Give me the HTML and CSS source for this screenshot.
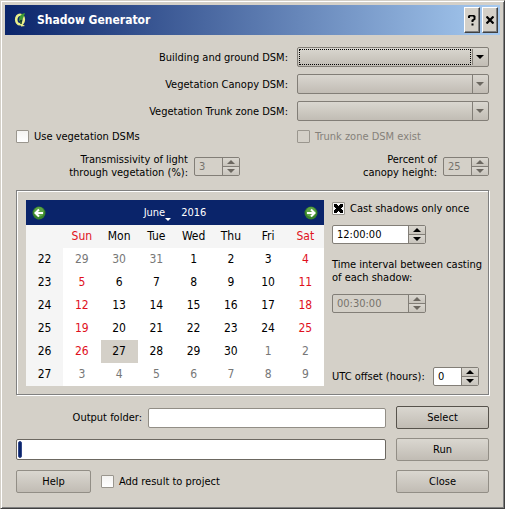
FILE: index.html
```html
<!DOCTYPE html>
<html lang="en">
<head>
<meta charset="utf-8">
<title>Shadow Generator</title>
<link rel="stylesheet" href="styles.css">
</head>
<body>
<main class="window">
  <header class="titlebar">
    <svg class="logo" viewBox="0 0 16 16" aria-hidden="true">
      <ellipse cx="7" cy="7.500" rx="3.800" ry="4.800" fill="none" stroke="#e9ef8a" stroke-width="2.600"/>
      <path d="M7 9l2 3 3 2-4 .5z" fill="#e9ef8a"/>
      <path d="M6 9c0-4 1-7 6-8-1 3-2 7-5 8z" fill="#3c9a35"/>
      <path d="M8 8v4" stroke="#12401c" stroke-width="1.500"/>
    </svg>
    <h1>Shadow Generator</h1>
    <button class="caption" aria-label="Context help"><svg width="8" height="11" viewBox="0 0 8 11"><path d="M1 3V1.500L2 .5h3l1.500 1V4L4.500 5.500V7" fill="none" stroke="#000" stroke-width="2"/><path d="M3.500 8.500h2v2h-2z"/></svg></button>
    <button class="caption" aria-label="Close window"><svg width="8" height="8" viewBox="0 0 8 8"><path d="M.5.500l7 7M7.500.500l-7 7" stroke="#000" stroke-width="2.200"/></svg></button>
  </header>

  <form class="content">
    <div class="sources">
      <label for="ground">Building and ground DSM:</label>
      <span class="combo focus"><select id="ground"></select></span>
      <label for="canopy">Vegetation Canopy DSM:</label>
      <span class="combo off"><select id="canopy" disabled></select></span>
      <label for="trunk">Vegetation Trunk zone DSM:</label>
      <span class="combo off"><select id="trunk" disabled></select></span>
    </div>

    <div class="options">
      <label class="check"><input type="checkbox">Use vegetation DSMs</label>
      <label class="check off"><input type="checkbox" disabled>Trunk zone DSM exist</label>
    </div>

    <div class="params">
      <div class="field">
        <label for="trans">Transmissivity of light<br>through vegetation (%):</label>
        <span class="spin off"><input id="trans" type="text" value="3" disabled><span class="steps"><button type="button" class="up" aria-label="Increase" disabled></button><button type="button" class="down" aria-label="Decrease" disabled></button></span></span>
      </div>
      <div class="field">
        <label for="percent">Percent of<br>canopy height:</label>
        <span class="spin off"><input id="percent" type="text" value="25" disabled><span class="steps"><button type="button" class="up" aria-label="Increase" disabled></button><button type="button" class="down" aria-label="Decrease" disabled></button></span></span>
      </div>
    </div>

    <section class="group">
      <div class="calendar">
        <div class="nav">
          <button type="button" class="arrow" aria-label="Previous month"><svg viewBox="0 0 14 14"><circle cx="7" cy="7" r="6.500" fill="#38822b"/><circle cx="7" cy="6" r="5" fill="#5ca445"/><path d="M11 7H4M7 3.500L3.500 7 7 10.500" fill="none" stroke="#fff" stroke-width="2"/></svg></button>
          <span class="when"><button type="button" class="month">June</button><button type="button">2016</button></span>
          <button type="button" class="arrow" aria-label="Next month"><svg viewBox="0 0 14 14"><circle cx="7" cy="7" r="6.500" fill="#38822b"/><circle cx="7" cy="6" r="5" fill="#5ca445"/><path d="M3 7h7M7 3.500L10.500 7 7 10.500" fill="none" stroke="#fff" stroke-width="2"/></svg></button>
        </div>
        <table>
          <thead><tr><td></td><th class="red">Sun</th><th>Mon</th><th>Tue</th><th>Wed</th><th>Thu</th><th>Fri</th><th class="red">Sat</th></tr></thead>
          <tbody>
            <tr><th>22</th><td class="dim">29</td><td class="dim">30</td><td class="dim">31</td><td>1</td><td>2</td><td>3</td><td class="red">4</td></tr>
            <tr><th>23</th><td class="red">5</td><td>6</td><td>7</td><td>8</td><td>9</td><td>10</td><td class="red">11</td></tr>
            <tr><th>24</th><td class="red">12</td><td>13</td><td>14</td><td>15</td><td>16</td><td>17</td><td class="red">18</td></tr>
            <tr><th>25</th><td class="red">19</td><td>20</td><td>21</td><td>22</td><td>23</td><td>24</td><td class="red">25</td></tr>
            <tr><th>26</th><td class="red">26</td><td class="selected">27</td><td>28</td><td>29</td><td>30</td><td class="dim">1</td><td class="dim">2</td></tr>
            <tr><th>27</th><td class="dim">3</td><td class="dim">4</td><td class="dim">5</td><td class="dim">6</td><td class="dim">7</td><td class="dim">8</td><td class="dim">9</td></tr>
          </tbody>
        </table>
      </div>
      <div class="times">
        <label class="check"><input type="checkbox" checked>Cast shadows only once</label>
        <span class="spin wide"><input type="text" value="12:00:00" aria-label="Time"><span class="steps"><button type="button" class="up" aria-label="Later"></button><button type="button" class="down" aria-label="Earlier"></button></span></span>
        <label for="interval" class="interval">Time interval between casting<br>of each shadow:</label>
        <span class="spin wide off"><input id="interval" type="text" value="00:30:00" disabled><span class="steps"><button type="button" class="up" aria-label="Increase" disabled></button><button type="button" class="down" aria-label="Decrease" disabled></button></span></span>
        <div class="utc">
          <label for="utc">UTC offset (hours):</label>
          <span class="spin"><input id="utc" type="text" value="0"><span class="steps"><button type="button" class="up" aria-label="Increase"></button><button type="button" class="down" aria-label="Decrease"></button></span></span>
        </div>
      </div>
    </section>

    <div class="actions">
      <div class="output"><label for="folder">Output folder:</label><input id="folder" class="line" type="text"></div>
      <button type="button" class="push default">Select</button>
      <div class="progress" role="progressbar" aria-label="Progress" aria-valuenow="0"><span class="chunk"></span></div>
      <button type="button" class="push">Run</button>
      <div class="bottom">
        <button type="button" class="push help">Help</button>
        <label class="check"><input type="checkbox">Add result to project</label>
      </div>
      <button type="button" class="push">Close</button>
    </div>
  </form>
</main>
</body>
</html>
```
FILE: styles.css
```css
* { box-sizing: border-box; }

body {
  margin: 0;
  background: #d4d0c8;
  color: #000;
  font: 11px/13px "DejaVu Sans Condensed", Tahoma, sans-serif;
}

button, input, select { font: inherit; color: inherit; margin: 0; }
button { padding: 0; }

.window {
  min-height: 100vh;
  padding: 3px;
  border: 1px solid;
  border-color: #d4d0c8 #404040 #404040 #d4d0c8;
  box-shadow: inset 1px 1px #fff, inset -1px -1px #808080;
}

/* Title bar */
.titlebar {
  display: flex;
  align-items: center;
  gap: 2px;
  height: 30px;
  margin: 1px;
  padding: 0 2px 0 8px;
  background: linear-gradient(90deg, #0a246a, #a6caf0);
}
.logo { width: 16px; height: 16px; }
h1 {
  flex: 1;
  margin: 0 0 0 6px;
  color: #fff;
  font: bold 12px/16px "DejaVu Sans Condensed", Tahoma, sans-serif;
}
.caption {
  display: grid;
  place-items: center;
  width: 16px;
  height: 26px;
  background: #d4d0c8;
  border: 1px solid;
  border-color: #fff #404040 #404040 #fff;
  box-shadow: inset -1px -1px #808080;
}

.content { padding: 11px 12px; }

/* Combo boxes */
.sources {
  display: grid;
  grid-template-columns: 1fr 192px;
  gap: 7px 9px;
  align-items: center;
  text-align: right;
}
.combo {
  position: relative;
  display: block;
  height: 20px;
}
.combo select {
  display: block;
  appearance: none;
  width: 100%;
  height: 100%;
  border: 1px solid #827e77;
  border-radius: 2px;
  background: linear-gradient(#dad7d0, #c1bcb4);
  opacity: 1;
}
.combo::before {
  content: "";
  position: absolute;
  top: 1px;
  bottom: 1px;
  right: 16px;
  border-left: 1px solid #827e77;
}
.combo::after {
  content: "";
  position: absolute;
  top: 8px;
  right: 5px;
  border: 4px solid transparent;
  border-top-color: #000;
  border-bottom: 0;
}
.combo.off::after { border-top-color: #6c6861; }
.combo.focus::before {
  left: 2px;
  top: 2px;
  bottom: 2px;
  right: 18px;
  border: 1px dotted #000;
  box-shadow: 1px 0 #d0ccc4, 2px 0 #827e77;
}

/* Check boxes */
.check { display: flex; align-items: center; gap: 5px; height: 13px; }
.check input {
  display: grid;
  place-items: center;
  appearance: none;
  width: 13px;
  height: 13px;
  border: 1px solid #9a968e;
  border-radius: 1px;
  background: linear-gradient(#f4f3f1, #fff);
}
.check.off { color: #85817a; }
.check.off input { background: #d4d0c8; }
.check input:checked::before {
  content: "";
  width: 9px;
  height: 9px;
  background:
    linear-gradient(45deg, transparent 36%, #000 36% 64%, transparent 64%),
    linear-gradient(-45deg, transparent 36%, #000 36% 64%, transparent 64%);
}
.options {
  display: grid;
  grid-template-columns: 1fr 192px;
  margin-top: 9px;
}

/* Spin boxes */
.spin {
  display: flex;
  width: 46px;
  height: 19px;
  border: 1px solid #827e77;
  border-radius: 2px;
  background: #fff;
  overflow: hidden;
}
.spin.wide { width: 94px; }
.spin > input {
  flex: 1;
  min-width: 0;
  padding: 0 4px;
  border: 0;
  background: none;
}
.spin.off { background: #d4d0c8; color: #77736c; }
.steps {
  display: flex;
  flex-direction: column;
  width: 17px;
  border-left: 1px solid #827e77;
}
.steps button {
  flex: 1;
  display: grid;
  place-items: center;
  border: 0;
  background: linear-gradient(#dad7d0, #c8c4bc);
}
.steps .down { border-top: 1px solid #827e77; }
.steps button::before { content: ""; border: 4px solid transparent; }
.steps .up::before { border-top: 0; border-bottom-color: #000; }
.steps .down::before { border-bottom: 0; border-top-color: #000; }
.off .steps .up::before { border-bottom-color: #6c6861; }
.off .steps .down::before { border-top-color: #6c6861; }

.params {
  display: flex;
  justify-content: space-between;
  padding-left: 52px;
  margin-top: 10px;
}
.field {
  display: flex;
  align-items: center;
  justify-content: flex-end;
  gap: 6px;
  width: 172px;
  text-align: right;
}

/* Calendar group */
.group {
  display: flex;
  gap: 8px;
  margin-top: 11px;
  padding: 9px 9px 8px;
  border: 1px solid #808080;
  box-shadow: inset 1px 1px #fff, 1px 1px #fff;
}
.calendar { flex: 1; background: #fff; font-size: 12px; }
.nav {
  display: flex;
  align-items: center;
  justify-content: space-between;
  height: 25px;
  padding: 0 6px;
  background: #0a246a;
  color: #fff;
  font-size: 11px;
}
.nav button { border: 0; background: none; }
.arrow svg { display: block; width: 14px; height: 14px; }
.when { display: flex; gap: 16px; }
.month { position: relative; }
.month::after {
  content: "";
  position: absolute;
  right: -6px;
  bottom: -2px;
  border: 3px solid transparent;
  border-top-color: #fff;
  border-bottom: 0;
}
table { width: 100%; border-collapse: collapse; table-layout: fixed; }
th, td { height: 23px; padding: 0; text-align: center; font-weight: normal; }
thead, th { background: #f5f5f5; }
.red { color: #e0101c; }
.dim { color: #777; }
.selected { background: #d4d0c8; }

.times { display: flex; flex-direction: column; width: 147px; padding-top: 2px; white-space: nowrap; }
.times .spin.wide { margin-top: 10px; }
.interval { margin-top: 14px; }
.utc { display: flex; justify-content: space-between; align-items: center; margin-top: auto; }

/* Bottom rows */
.actions {
  display: grid;
  grid-template-columns: 1fr 93px;
  gap: 9px 10px;
  align-items: center;
  margin-top: 11px;
}
.output { display: flex; align-items: center; gap: 6px; }
.output label { width: 126px; text-align: right; }
.line {
  flex: 1;
  min-width: 0;
  height: 20px;
  border: 1px solid #928e86;
  border-radius: 2px;
  background: #fff;
}
.push {
  height: 23px;
  border: 1px solid #928e86;
  border-radius: 2px;
  background: linear-gradient(#dad7d0, #c1bcb4);
}
.default { border-color: #57534c; }
.progress {
  height: 21px;
  padding: 1px;
  border: 1px solid #6c6861;
  border-radius: 2px;
  background: #fff;
}
.chunk {
  display: block;
  width: 4px;
  height: 100%;
  border: 1px solid #33488a;
  border-radius: 2px;
  background: #0a246a;
}
.bottom { display: flex; align-items: center; gap: 10px; }
.help { width: 75px; }
```
